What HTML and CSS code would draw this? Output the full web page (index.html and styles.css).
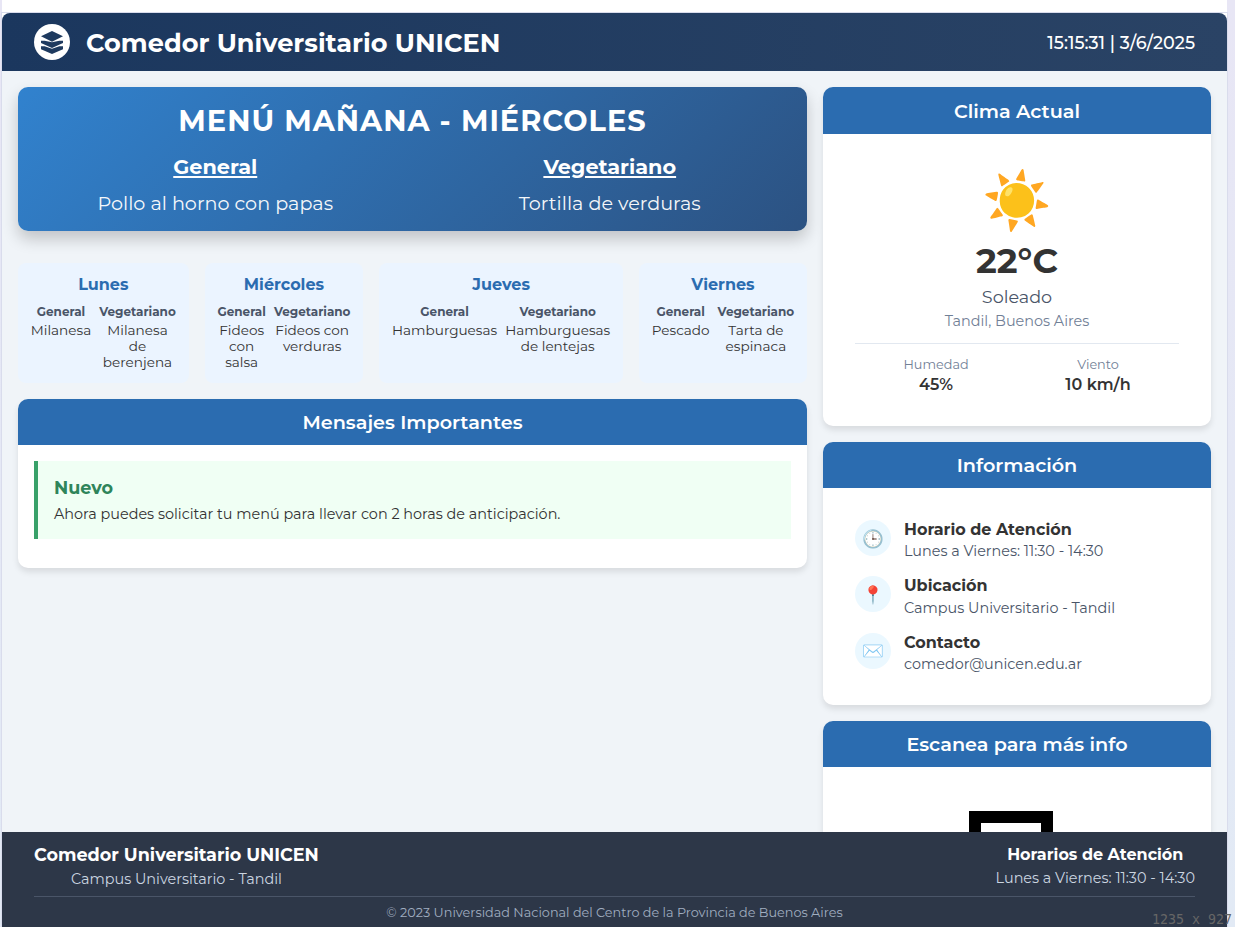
FILE: index.html
```html
<!DOCTYPE html>
<html lang="es">
<head>
<meta charset="utf-8">
<title>Comedor Universitario UNICEN</title>
<link rel="stylesheet" href="styles.css">
</head>
<body>
<div class="top-strip"></div>
<div class="screen">
  <header class="header">
    <div class="brand">
      <svg class="logo" viewBox="0 0 108 108"><circle cx="54" cy="54" r="54" fill="#fff"/><g fill="#1e3a5f"><path d="M54 21 87 37 54 53 21 37z"/><path d="M21 50H32L54 55 76 50H87V57L54 72 21 57z"/><path d="M21 67H32L54 74 76 67H87V76L54 90 21 76z"/></g></svg>
      <h1 class="brand-name">Comedor Universitario UNICEN</h1>
    </div>
    <div class="clock">15:15:31 | 3/6/2025</div>
  </header>
  <main class="main">
    <section class="left">
      <div class="hero">
        <h2 class="hero-title">MENÚ MAÑANA - MIÉRCOLES</h2>
        <div class="hero-menus">
          <div><h3 class="hero-kind">General</h3><p class="hero-dish">Pollo al horno con papas</p></div>
          <div><h3 class="hero-kind">Vegetariano</h3><p class="hero-dish">Tortilla de verduras</p></div>
        </div>
      </div>
      <div class="days">
        <article class="day"><h3 class="day-name">Lunes</h3><div class="options mon"><div><h4>General</h4><p>Milanesa</p></div><div><h4>Vegetariano</h4><p>Milanesa<br>de<br>berenjena</p></div></div></article>
        <article class="day"><h3 class="day-name">Miércoles</h3><div class="options wed"><div><h4>General</h4><p>Fideos<br>con<br>salsa</p></div><div><h4>Vegetariano</h4><p>Fideos con<br>verduras</p></div></div></article>
        <article class="day"><h3 class="day-name">Jueves</h3><div class="options thu"><div><h4>General</h4><p>Hamburguesas</p></div><div><h4>Vegetariano</h4><p>Hamburguesas<br>de lentejas</p></div></div></article>
        <article class="day"><h3 class="day-name">Viernes</h3><div class="options fri"><div><h4>General</h4><p>Pescado</p></div><div><h4>Vegetariano</h4><p>Tarta de<br>espinaca</p></div></div></article>
      </div>
      <div class="card messages">
        <h2 class="card-title">Mensajes Importantes</h2>
        <div class="message"><h3>Nuevo</h3><p>Ahora puedes solicitar tu menú para llevar con 2 horas de anticipación.</p></div>
      </div>
    </section>
    <aside class="right">
      <div class="card weather">
        <h2 class="card-title">Clima Actual</h2>
        <div class="weather-body">
          <div class="sun">☀️</div>
          <div class="temp">22°C</div>
          <div class="condition">Soleado</div>
          <div class="place">Tandil, Buenos Aires</div>
          <div class="stats"><div><span class="stat-label">Humedad</span><b>45%</b></div><div><span class="stat-label">Viento</span><b>10 km/h</b></div></div>
        </div>
      </div>
      <div class="card info">
        <h2 class="card-title">Información</h2>
        <ul class="info-list">
          <li><span class="badge low">🕒</span><div><h3>Horario de Atención</h3><p>Lunes a Viernes: 11:30 - 14:30</p></div></li>
          <li><span class="badge low">📍</span><div><h3>Ubicación</h3><p>Campus Universitario - Tandil</p></div></li>
          <li><span class="badge">✉️</span><div><h3>Contacto</h3><p>comedor@unicen.edu.ar</p></div></li>
        </ul>
      </div>
      <div class="card qr">
        <h2 class="card-title">Escanea para más info</h2>
        <svg class="qr-code" viewBox="0 0 84 84"><path d="M6 6H78V78H6z" fill="none" stroke="#000" stroke-width="12"/><path d="M24 24h36v36H24z"/></svg>
      </div>
    </aside>
  </main>
  <footer class="footer">
    <div class="footer-row">
      <div class="footer-place"><h3>Comedor Universitario UNICEN</h3><p>Campus Universitario - Tandil</p></div>
      <div class="footer-hours"><h3>Horarios de Atención</h3><p>Lunes a Viernes: 11:30 - 14:30</p></div>
    </div>
    <p class="copyright">© 2023 Universidad Nacional del Centro de la Provincia de Buenos Aires</p>
  </footer>
</div>
<div class="size-label">1235 x 927</div>
</body>
</html>
```
FILE: styles.css
```css
* { box-sizing: border-box; margin: 0; padding: 0; }
body {
  width: 1235px; height: 927px; overflow: hidden; position: relative;
  font-family: Montserrat, Inter, sans-serif; color: #333;
  background: linear-gradient(#e8e6f5, #e2eaf5);
}
.top-strip { height: 13px; margin: 0 8px 0 2px; background: #fff; border-bottom: 1px solid #ddd; }
.screen { display: flex; flex-direction: column; width: 1225px; height: 914px; margin-left: 2px; background: linear-gradient(#fff 20px, #f0f4f8 20px); box-shadow: 0 0 0 1px #d9dcec; }
.header {
  display: flex; flex: none; align-items: center; justify-content: space-between; height: 58px; padding: 0 32px;
  color: #fff; background: linear-gradient(90deg, #1b375e, #2a4365); border-radius: 8px 8px 0 0;
}
.brand { display: flex; align-items: center; gap: 16px; }
.logo { width: 36px; height: 36px; }
.brand-name { padding-top: 2px; font-size: 25.6px; font-weight: 700; line-height: 34px; white-space: nowrap; }
.clock { padding-top: 1px; font-size: 17.6px; line-height: 24px; font-weight: 500; white-space: nowrap; }
.main { flex: 1; min-height: 0; overflow: hidden; display: grid; grid-template-columns: 789px 388px; gap: 16px; padding: 16px; }
.left, .right { display: flex; flex-direction: column; gap: 16px; }
.hero {
  flex: none; height: 144px; margin-bottom: 16px; padding: 16px; text-align: center; color: #fff; border-radius: 10px;
  background: linear-gradient(135deg, #3182ce, #2c5282);
  box-shadow: 0 8px 16px rgba(0, 0, 0, .2);
}
.hero-title { font-size: 28.8px; line-height: 36px; font-weight: 700; letter-spacing: 1px; }
.hero-menus { display: grid; grid-template-columns: 1fr 1fr; gap: 32px; margin-top: 15px; }
.hero-kind { display: inline-block; font-size: 20.8px; line-height: 26px; font-weight: 700; text-decoration: underline; }
.hero-dish { margin-top: 11px; font-size: 19.2px; line-height: 24px; opacity: .95; }
.days { display: grid; grid-template-columns: 170.6px 158.7px 243.7px 168px; gap: 16px; height: 120px; }
.day { padding: 12px 0; text-align: center; background: #ebf4ff; border-radius: 8px; }
.day-name { font-size: 16px; line-height: 20px; font-weight: 700; color: #2b6cb0; }
.options { display: grid; gap: 8px; justify-content: center; margin-top: 9px; white-space: nowrap; }
.mon { grid-template-columns: 60.4px 76.6px; }
.wed { grid-template-columns: 48.5px 76.6px; }
.thu { grid-template-columns: 105.1px 105.1px; }
.fri { grid-template-columns: 57.9px 76.6px; }
.options h4 { font-size: 12px; line-height: 16px; font-weight: 700; color: #4a5568; }
.options p { margin-top: 2px; font-size: 13.6px; line-height: 16px; }
.card { flex: none; overflow: hidden; background: #fff; border-radius: 10px; box-shadow: 0 4px 6px rgba(0, 0, 0, .1); }
.card-title { height: 46px; line-height: 47px; font-size: 19.2px; font-weight: 600; text-align: center; color: #fff; background: #2b6cb0; }
.messages { height: 169px; }
.message { height: 78px; margin: 16px; padding: 15px 16px; background: #f0fff4; border-left: 4px solid #38a169; }
.message h3 { font-size: 17.6px; line-height: 24px; font-weight: 700; color: #2f855a; }
.message p { margin-top: 2px; font-size: 14.4px; line-height: 24px; }
.weather { height: 339px; }
.weather .card-title { height: 47px; line-height: 49px; }
.weather-body { padding: 34px 32px 0; text-align: center; }
.sun { height: 64px; font-size: 56px; line-height: 64px; }
.temp { margin-top: 7px; font-size: 35.2px; line-height: 44px; font-weight: 700; }
.condition { margin-top: 3px; font-size: 17.6px; line-height: 22px; color: #4a5568; }
.place { margin-top: 2px; font-size: 14.4px; line-height: 22px; color: #718096; }
.stats { display: grid; grid-template-columns: 1fr 1fr; margin-top: 11px; padding-top: 12px; border-top: 1px solid #e2e8f0; }
.stats div { display: grid; justify-items: center; line-height: 18px; gap: 1px; }
.stat-label { font-size: 12.8px; color: #718096; }
.stats b { font-size: 16px; line-height: 20px; font-weight: 600; }
.info { height: 263px; }
.info-list { list-style: none; padding: 30px 32px; display: grid; gap: 12.5px; }
.info-list li { display: flex; gap: 13px; height: 44px; align-items: center; }
.badge { display: grid; place-items: center; width: 36px; height: 36px; margin-bottom: 4px; border-radius: 50%; background: #ebf8ff; font-size: 17.6px; line-height: 22px; }
.badge.low { padding-top: 2px; }
.info li:nth-child(2) .badge { margin-bottom: 5px; }
.info h3 { font-size: 16px; line-height: 22px; font-weight: 700; }
.info p { font-size: 14.4px; line-height: 21px; color: #4a5568; }
.info li:nth-child(2) p { padding-top: 1px; margin-bottom: -1px; }
.qr { height: 300px; }
.qr-code { display: block; width: 84px; height: 84px; margin: 44px 0 0 146px; }
.footer { flex: none; height: 95px; padding: 11px 32px 0; color: #fff; background: #2d3748; }
.footer-row { display: flex; justify-content: space-between; height: 54px; text-align: center; border-bottom: 1px solid #4a5568; }
.footer h3 { font-size: 17.6px; line-height: 24px; font-weight: 700; }
.footer .footer-hours h3 { font-size: 16px; }
.footer-row p { font-size: 14.4px; line-height: 23px; color: #cbd5e0; }
.footer-place p { line-height: 25px; }
.copyright { margin-top: 6px; font-size: 12.8px; line-height: 20px; text-align: center; color: #a0aec0; }
.size-label { position: absolute; right: 3px; bottom: -1px; font: 13.3px/16px "DejaVu Sans Mono", monospace; color: #666; }
```
